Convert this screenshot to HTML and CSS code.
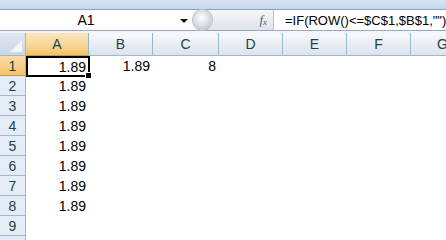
FILE: index.html
```html
<!DOCTYPE html>
<html>
<head>
<meta charset="utf-8">
<link rel="stylesheet" href="styles.css">
</head>
<body>
<div class="app">
  <div class="ribbon-edge"></div>
  <div class="formula-bar">
    <div class="name-box">
      <span class="name">A1</span>
      <span class="arrow"></span>
    </div>
    <div class="fx-box">
      <span class="knob"></span>
      <span class="fx">f<sub>x</sub></span>
    </div>
    <div class="formula">=IF(ROW()&lt;=$C$1,$B$1,"")</div>
  </div>
  <div class="spacer"></div>
  <div class="sheet">
    <div class="corner"><span class="tri"></span></div>
    <div class="ch sel">A</div>
    <div class="ch">B</div>
    <div class="ch">C</div>
    <div class="ch">D</div>
    <div class="ch">E</div>
    <div class="ch">F</div>
    <div class="ch">G</div>

    <div class="rh sel">1</div>
    <div class="cell active">1.89<span class="handle"></span></div>
    <div class="cell">1.89</div>
    <div class="cell">8</div>
    <div class="cell"></div><div class="cell"></div><div class="cell"></div><div class="cell"></div>

    <div class="rh">2</div>
    <div class="cell">1.89</div>
    <div class="cell"></div><div class="cell"></div><div class="cell"></div><div class="cell"></div><div class="cell"></div><div class="cell"></div>

    <div class="rh">3</div>
    <div class="cell">1.89</div>
    <div class="cell"></div><div class="cell"></div><div class="cell"></div><div class="cell"></div><div class="cell"></div><div class="cell"></div>

    <div class="rh">4</div>
    <div class="cell">1.89</div>
    <div class="cell"></div><div class="cell"></div><div class="cell"></div><div class="cell"></div><div class="cell"></div><div class="cell"></div>

    <div class="rh">5</div>
    <div class="cell">1.89</div>
    <div class="cell"></div><div class="cell"></div><div class="cell"></div><div class="cell"></div><div class="cell"></div><div class="cell"></div>

    <div class="rh">6</div>
    <div class="cell">1.89</div>
    <div class="cell"></div><div class="cell"></div><div class="cell"></div><div class="cell"></div><div class="cell"></div><div class="cell"></div>

    <div class="rh">7</div>
    <div class="cell">1.89</div>
    <div class="cell"></div><div class="cell"></div><div class="cell"></div><div class="cell"></div><div class="cell"></div><div class="cell"></div>

    <div class="rh">8</div>
    <div class="cell">1.89</div>
    <div class="cell"></div><div class="cell"></div><div class="cell"></div><div class="cell"></div><div class="cell"></div><div class="cell"></div>

    <div class="rh">9</div>
    <div class="cell"></div><div class="cell"></div><div class="cell"></div><div class="cell"></div><div class="cell"></div><div class="cell"></div><div class="cell"></div>

    <div class="rh"></div>
    <div class="cell"></div><div class="cell"></div><div class="cell"></div><div class="cell"></div><div class="cell"></div><div class="cell"></div><div class="cell"></div>
  </div>
</div>
</body>
</html>
```

FILE: styles.css
```css
html, body {
  margin: 0;
  padding: 0;
  background: #ffffff;
}
.app {
  width: 446px;
  height: 240px;
  overflow: hidden;
  font-family: "Liberation Sans", Arial, sans-serif;
  font-size: 13px;
  color: #000;
}
.ribbon-edge {
  height: 9px;
  background: linear-gradient(#d6e3f3, #c2d6ee);
  border-bottom: 1px solid #8da3bf;
}
.formula-bar {
  height: 20px;
  display: flex;
  align-items: stretch;
  background: #fff;
  border-bottom: 1px solid #9aa9bb;
}
.name-box {
  width: 193px;
  display: flex;
  align-items: center;
}
.name {
  width: 172px;
  text-align: center;
  font-size: 14px;
}
.arrow {
  width: 0;
  height: 0;
  border-left: 4px solid transparent;
  border-right: 4px solid transparent;
  border-top: 4px solid #111;
  margin-left: 8px;
  margin-top: 2px;
}
.fx-box {
  width: 80px;
  display: flex;
  align-items: center;
  justify-content: flex-end;
  position: relative;
  background: linear-gradient(#f4f6f9, #dfe4ea);
  border-radius: 11px 0 0 11px;
  border-right: 1px solid #b6bfca;
}
.knob {
  position: absolute;
  left: 0;
  top: 0;
  width: 19px;
  height: 20px;
  border-radius: 50%;
  background: radial-gradient(circle at 45% 40%, #ffffff 0, #e7eaee 30%, #c4cad2 75%, #a8b0bb 100%);
  box-shadow: 0 0 0 1px #b9c1cc;
}
.fx {
  font-family: "Liberation Serif", "Times New Roman", serif;
  font-style: italic;
  font-size: 13px;
  color: #55606e;
  margin-right: 6px;
}
.fx sub {
  font-size: 9px;
  vertical-align: -1px;
}
.formula {
  flex: 1;
  padding-left: 11px;
  white-space: nowrap;
  overflow: hidden;
  display: flex;
  align-items: center;
  font-size: 13px;
}
.spacer {
  height: 2px;
  background: #f3f5f8;
}
.sheet {
  display: grid;
  grid-template-columns: 26px 63px 64px 66px 64px 64px 64px 64px;
  grid-template-rows: 23px repeat(10, 20px);
}
.corner {
  background: linear-gradient(#dfe7f2, #cbd7e6);
  border-right: 1px solid #9eb6ce;
  border-bottom: 1px solid #9eb6ce;
  position: relative;
}
.tri {
  position: absolute;
  right: 3px;
  bottom: 3px;
  width: 0;
  height: 0;
  border-left: 12px solid transparent;
  border-bottom: 12px solid #f2f5f9;
}
.ch {
  background: linear-gradient(#f7f9fc 0%, #e9eef5 50%, #dae3ee 100%);
  border-right: 1px solid #9eb6ce;
  border-bottom: 1px solid #9eb6ce;
  display: flex;
  align-items: center;
  justify-content: center;
  color: #27413e;
  font-size: 14px;
}
.ch.sel {
  background: linear-gradient(#fae6bd 0%, #f8d99c 50%, #f1c36d 100%);
  border-bottom-color: #c29a4a;
}
.rh {
  background: #e4ecf7;
  border-right: 1px solid #9eb6ce;
  border-bottom: 1px solid #9eb6ce;
  display: flex;
  align-items: center;
  justify-content: center;
  color: #27413e;
  font-size: 14px;
}
.rh.sel {
  background: linear-gradient(#f9dca3, #f2c56e);
  border-bottom-color: #c29a4a;
}
.cell {
  display: flex;
  align-items: center;
  justify-content: flex-end;
  padding-right: 3px;
  font-size: 14px;
  position: relative;
}
.cell.active {
  box-shadow: inset 0 0 0 2px #000;
  margin-right: -1px;
  margin-bottom: -1px;
  padding-right: 4px;
}
.handle {
  position: absolute;
  right: -2px;
  bottom: -2px;
  width: 5px;
  height: 5px;
  background: #000;
  border: 1px solid #fff;
}
```
